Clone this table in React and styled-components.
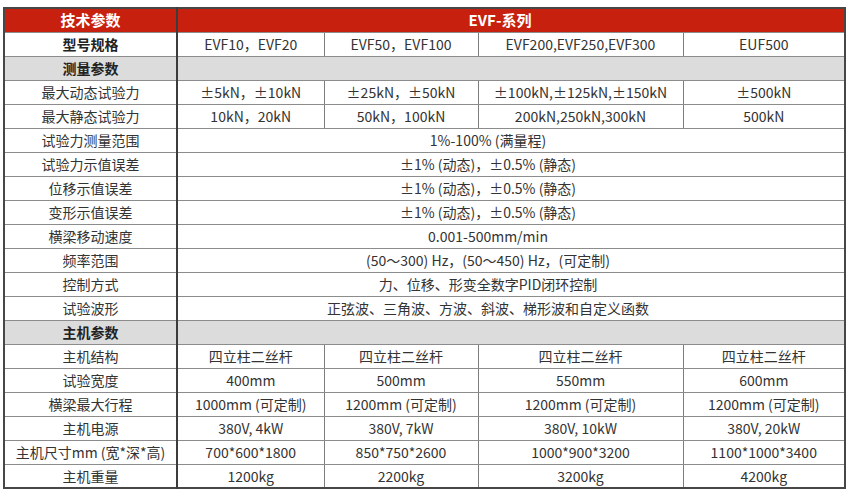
import React from "react";
import styled, { createGlobalStyle, css } from "styled-components";

const Global = createGlobalStyle`
  html, body { margin: 0; padding: 0; background: #fff; }
  body { font-family: "Noto Sans CJK SC", "Noto Sans", sans-serif; }
`;

const Page = styled.div`
  padding: 7px 0 0 3px;
`;

const Table = styled.table`
  width: 841px;
  border-collapse: collapse;
  table-layout: fixed;
  border: 2px solid #474747;
  font-family: "Noto Sans CJK SC", "Noto Sans", sans-serif;
  font-size: 14px;
  color: #333;
`;

const Row = styled.tr`
  height: ${(p) => (p.$short ? "23px" : "24px")};
  ${(p) =>
    p.$kind === "head" &&
    css`
      background: #c8200f;
      color: #fff;
    `}
  ${(p) =>
    p.$kind === "section" &&
    css`
      background: #dcdcdc;
    `}
`;

const Label = styled.td`
  padding: 0;
  text-align: center;
  vertical-align: middle;
  line-height: 22px;
  white-space: nowrap;
  border-right: 2px solid #3c3c3c;
  border-bottom: 1px solid #8c8c8c;
  font-weight: ${(p) => (p.$bold ? 700 : 400)};
  font-size: ${(p) => (p.$big ? "15px" : "14px")};
  color: ${(p) => (p.$light ? "#fff" : p.$bold ? "#222" : "#333")};
`;

const Cell = styled.td`
  padding: 0 ${(p) => (p.$shift ? `${p.$shift}px` : "0")} 0 0;
  text-align: center;
  vertical-align: middle;
  line-height: 22px;
  white-space: nowrap;
  border-left: ${(p) => (p.$noLeft ? "none" : "1px solid #7d7d7d")};
  border-bottom: 1px solid #8c8c8c;
  font-weight: ${(p) => (p.$bold ? 700 : 400)};
  font-size: ${(p) => (p.$big ? "15px" : "14px")};
`;

const specs = [
  { type: "head", label: "技术参数", span: "EVF-系列" },
  { type: "cols", label: "型号规格", bold: true, cells: ["EVF10，EVF20", "EVF50，EVF100", "EVF200,EVF250,EVF300", "EUF500"] },
  { type: "section", label: "测量参数" },
  { type: "cols", label: "最大动态试验力", cells: ["±5kN，±10kN", "±25kN，±50kN", "±100kN,±125kN,±150kN", "±500kN"] },
  { type: "cols", label: "最大静态试验力", cells: ["10kN，20kN", "50kN，100kN", "200kN,250kN,300kN", "500kN"] },
  { type: "span", label: "试验力测量范围", value: "1%-100% (满量程)" },
  { type: "span", label: "试验力示值误差", value: "±1% (动态)，±0.5% (静态)" },
  { type: "span", label: "位移示值误差", value: "±1% (动态)，±0.5% (静态)" },
  { type: "span", label: "变形示值误差", value: "±1% (动态)，±0.5% (静态)" },
  { type: "span", label: "横梁移动速度", value: "0.001-500mm/min" },
  { type: "span", label: "频率范围", value: "(50～300) Hz，(50～450) Hz，(可定制)" },
  { type: "span", label: "控制方式", value: "力、位移、形变全数字PID闭环控制" },
  { type: "span", label: "试验波形", value: "正弦波、三角波、方波、斜波、梯形波和自定义函数" },
  { type: "section", label: "主机参数" },
  { type: "cols", label: "主机结构", cells: ["四立柱二丝杆", "四立柱二丝杆", "四立柱二丝杆", "四立柱二丝杆"] },
  { type: "cols", label: "试验宽度", cells: ["400mm", "500mm", "550mm", "600mm"] },
  { type: "cols", label: "横梁最大行程", cells: ["1000mm (可定制)", "1200mm (可定制)", "1200mm (可定制)", "1200mm (可定制)"] },
  { type: "cols", label: "主机电源", cells: ["380V, 4kW", "380V, 7kW", "380V, 10kW", "380V, 20kW"] },
  { type: "cols", label: "主机尺寸mm (宽*深*高)", cells: ["700*600*1800", "850*750*2600", "1000*900*3200", "1100*1000*3400"] },
  { type: "cols", label: "主机重量", short: true, cells: ["1200kg", "2200kg", "3200kg", "4200kg"] },
];

export default function App() {
  return (
    <Page>
      <Global />
      <Table>
        <colgroup>
          <col style={{ width: 173 }} />
          <col style={{ width: 147 }} />
          <col style={{ width: 154 }} />
          <col style={{ width: 205 }} />
          <col style={{ width: 162 }} />
        </colgroup>
        <tbody>
          {specs.map((r, i) => {
            if (r.type === "head") {
              return (
                <Row key={i} $kind="head">
                  <Label $bold $big $light>{r.label}</Label>
                  <Cell colSpan={4} $bold $big $shift={22} $noLeft>
                    {r.span}
                  </Cell>
                </Row>
              );
            }
            if (r.type === "section") {
              return (
                <Row key={i} $kind="section">
                  <Label $bold>{r.label}</Label>
                  <Cell colSpan={4} />
                </Row>
              );
            }
            if (r.type === "span") {
              return (
                <Row key={i}>
                  <Label>{r.label}</Label>
                  <Cell colSpan={4} $shift={46}>{r.value}</Cell>
                </Row>
              );
            }
            return (
              <Row key={i} $short={r.short}>
                <Label $bold={r.bold}>{r.label}</Label>
                {r.cells.map((c, j) => (
                  <Cell key={j}>{c}</Cell>
                ))}
              </Row>
            );
          })}
        </tbody>
      </Table>
    </Page>
  );
}
